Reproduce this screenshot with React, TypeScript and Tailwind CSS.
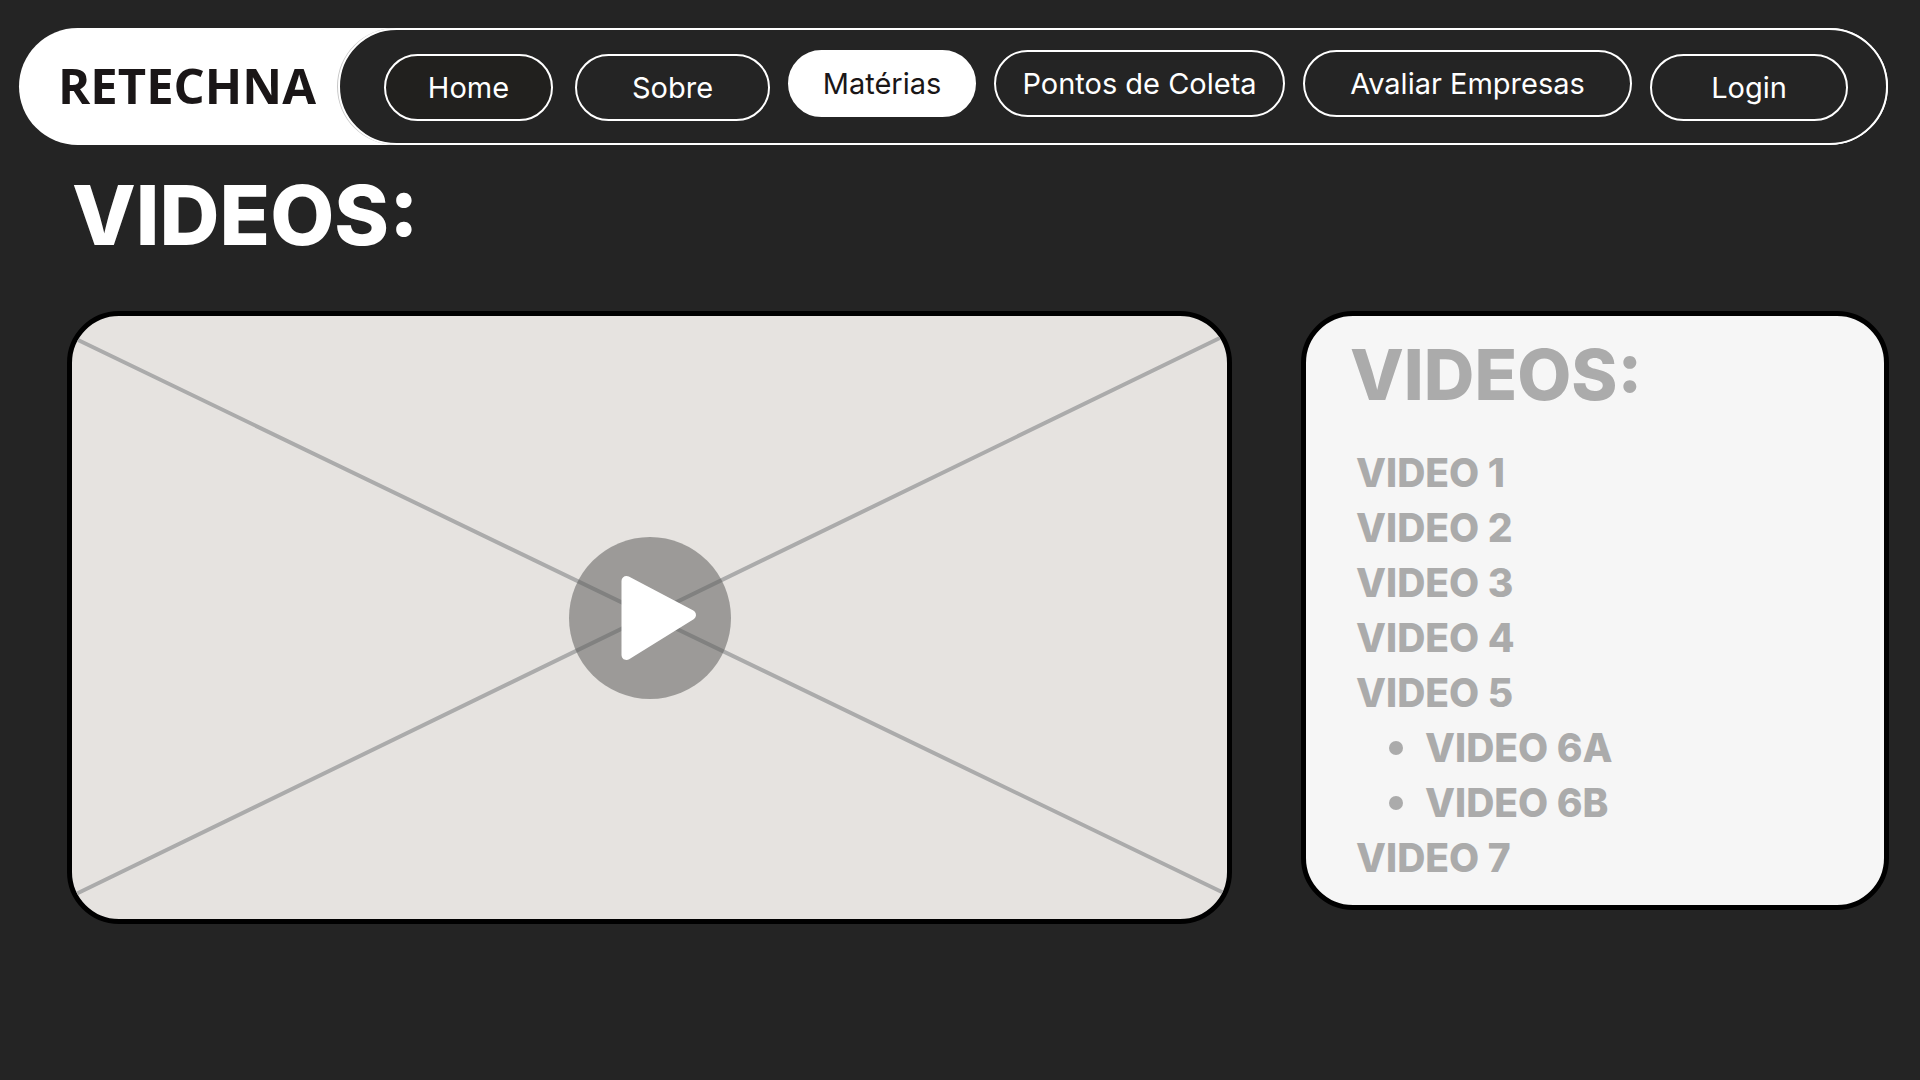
const pages = [
  { label: "Home", style: "mr-1 self-center border-white bg-[#21201e] text-white" },
  { label: "Sobre", style: "self-center border-white text-white" },
  { label: "Matérias", style: "self-start border-white bg-white text-[#1a1617]", current: true },
  { label: "Pontos de Coleta", style: "self-start border-white text-white" },
  { label: "Avaliar Empresas", style: "self-start border-white text-white" },
  { label: "Login", style: "self-center border-white text-white" },
];

const videos = [
  { label: "VIDEO 1" },
  { label: "VIDEO 2" },
  { label: "VIDEO 3" },
  { label: "VIDEO 4" },
  { label: "VIDEO 5", parts: ["VIDEO 6A", "VIDEO 6B"] },
  { label: "VIDEO 7" },
];

function Header() {
  return (
    <header className="ml-[19px] mr-8 flex h-[117px] rounded-full bg-white">
      <a
        href="#"
        className="flex w-[319px] shrink-0 items-center pb-[2px] pl-[39px] font-['Open_Sans',sans-serif] text-[49px] font-bold leading-none text-[#1a1617]"
      >
        RETECHNA
      </a>
      <nav
        aria-label="Principal"
        className="grid min-w-0 flex-1 grid-cols-[173fr_195fr_188fr_291fr_329fr_198fr] gap-x-[18px] rounded-full border-2 border-white bg-[#242424] pb-[18px] pl-11 pr-[38px] pt-5 shadow-[-1px_0_0_#c8c8c8]"
      >
        {pages.map((page) => (
          <a
            key={page.label}
            href="#"
            aria-current={page.current ? "page" : undefined}
            className={`flex h-[67px] items-center justify-center whitespace-nowrap rounded-full border-2 text-[29px] leading-none ${page.style}`}
          >
            {page.label}
          </a>
        ))}
      </nav>
    </header>
  );
}

function Player() {
  return (
    <section
      aria-label="Player"
      className="relative flex aspect-[1165/613] items-center justify-center overflow-hidden rounded-[52px] border-[5px] border-black bg-[#e6e3e0]"
    >
      <svg
        className="absolute inset-0 h-full w-full overflow-visible"
        viewBox="0 0 1155 603"
        preserveAspectRatio="none"
        stroke="#ababab"
        strokeWidth="4"
        aria-hidden="true"
      >
        <path d="M4 23 L1154 578 M4 578 L1154 19" vectorEffect="non-scaling-stroke" />
      </svg>
      <button
        type="button"
        aria-label="Reproduzir"
        className="relative size-[162px] rounded-full bg-[#5e5e5d]/55"
      >
        <svg viewBox="0 0 162 162" className="size-full" aria-hidden="true">
          <path
            d="M57.500 44 L122 78 L57.500 118 Z"
            fill="white"
            stroke="white"
            strokeWidth="10"
            strokeLinejoin="round"
          />
        </svg>
      </button>
    </section>
  );
}

function Playlist() {
  return (
    <aside className="self-start rounded-[52px] border-[5px] border-black bg-[#f6f6f6] pb-5 pl-11 pr-6 pt-6 font-extrabold text-[#ababab]">
      <h2 className="text-[70px] leading-[70px]">VIDEOS:</h2>
      <ul className="mt-[35px] pl-[6px] text-[39px] leading-[55px]">
        {videos.map((video) => (
          <li key={video.label}>
            <a href="#">{video.label}</a>
            {video.parts && (
              <ul className="pl-[33px]">
                {video.parts.map((part) => (
                  <li key={part} className="flex items-center gap-[22px]">
                    <span className="size-[14px] rounded-full bg-[#ababab]" />
                    <a href="#">{part}</a>
                  </li>
                ))}
              </ul>
            )}
          </li>
        ))}
      </ul>
    </aside>
  );
}

export default function App() {
  return (
    <div className="min-h-screen bg-[#242424] pb-12 pt-7 font-['Inter',sans-serif]">
      <Header />
      <main className="pl-[67px] pr-[31px]">
        <h1 className="mt-6 pl-[5px] text-[83px] font-extrabold leading-[92px] text-white">VIDEOS:</h1>
        <div className="mt-[50px] grid grid-cols-[1165fr_588fr] gap-[69px]">
          <Player />
          <Playlist />
        </div>
      </main>
    </div>
  );
}
